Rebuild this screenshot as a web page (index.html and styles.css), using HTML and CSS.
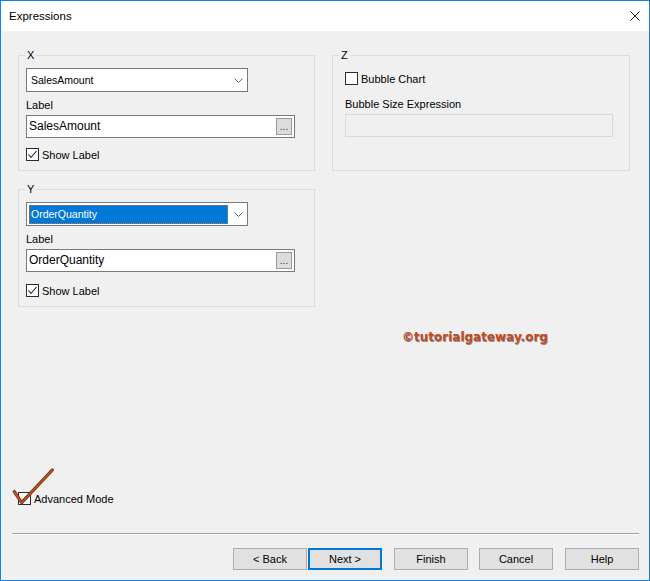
FILE: index.html
```html
<!DOCTYPE html>
<html>
<head>
<meta charset="utf-8">
<title>Expressions</title>
<link rel="stylesheet" href="styles.css">
</head>
<body>
<div class="window">
  <div class="titlebar">
    <span class="title">Expressions</span>
    <svg class="close" viewBox="0 0 10 10"><path d="M0.5 0.5 L9.5 9.5 M9.5 0.5 L0.5 9.5" stroke="#1a1a2a" stroke-width="1" fill="none"/></svg>
  </div>
  <div class="content">
    <div class="groups">
      <fieldset class="group group-x">
        <legend>X</legend>
        <div class="combo">
          <span class="combo-value">SalesAmount</span>
          <svg class="chevron" viewBox="0 0 9 5"><path d="M0.5 0.5 L4.5 4.5 L8.5 0.5" stroke="#666" stroke-width="1" fill="none"/></svg>
        </div>
        <div class="field-label">Label</div>
        <div class="textbox">
          <span class="textbox-value">SalesAmount</span>
          <span class="browse">...</span>
        </div>
        <div class="check">
          <span class="box"><svg class="tick" viewBox="0 0 11 11"><path d="M1.5 5.5 L4 8.5 L9.5 2" stroke="#1a1a2a" stroke-width="1.1" fill="none"/></svg></span>
          <span>Show Label</span>
        </div>
      </fieldset>
      <fieldset class="group group-z">
        <legend>Z</legend>
        <div class="check check-z">
          <span class="box"></span>
          <span>Bubble Chart</span>
        </div>
        <div class="field-label label-z">Bubble Size Expression</div>
        <div class="textbox textbox-disabled"></div>
      </fieldset>
      <fieldset class="group group-y">
        <legend>Y</legend>
        <div class="combo combo-focused">
          <span class="selection">OrderQuantity</span>
          <svg class="chevron" viewBox="0 0 9 5"><path d="M0.5 0.5 L4.5 4.5 L8.5 0.5" stroke="#666" stroke-width="1" fill="none"/></svg>
        </div>
        <div class="field-label">Label</div>
        <div class="textbox">
          <span class="textbox-value">OrderQuantity</span>
          <span class="browse">...</span>
        </div>
        <div class="check check-y">
          <span class="box"><svg class="tick" viewBox="0 0 11 11"><path d="M1.5 5.5 L4 8.5 L9.5 2" stroke="#1a1a2a" stroke-width="1.1" fill="none"/></svg></span>
          <span>Show Label</span>
        </div>
      </fieldset>
    </div>
    <div class="watermark">©tutorialgateway.org</div>
    <div class="advanced">
      <span class="box"></span>
      <span>Advanced Mode</span>
      <svg class="adv-mark" viewBox="0 0 44 40"><polyline points="2.3,25.7 9.7,36.7 40.3,4" stroke="#6b2a14" stroke-width="3.2" fill="none" stroke-linejoin="round" stroke-linecap="round"/><polyline points="2.3,25.7 9.7,36.7 40.3,4" stroke="#c9531f" stroke-width="1.6" fill="none" stroke-linejoin="round" stroke-linecap="round"/></svg>
    </div>
    <div class="separator"></div>
    <div class="buttons">
      <button class="btn">&lt; Back</button>
      <button class="btn btn-default">Next &gt;</button>
      <button class="btn btn-finish">Finish</button>
      <button class="btn btn-cancel">Cancel</button>
      <button class="btn btn-help">Help</button>
    </div>
  </div>
</div>
</body>
</html>
```
FILE: styles.css
```css
* { box-sizing: border-box; }
body {
  margin: 0;
  font-family: "Liberation Sans", Arial, sans-serif;
  font-size: 11px;
  color: #000;
}
.window {
  width: 650px;
  height: 581px;
  border: 1px solid #1883d7;
  display: flex;
  flex-direction: column;
  background: #f0f0f0;
}
.titlebar {
  flex: none;
  height: 30px;
  background: #fff;
  display: flex;
  align-items: center;
  justify-content: space-between;
  padding: 0 9px 0 8px;
}
.title { font-size: 11.5px; }
.close { width: 10px; height: 10px; display: block; }
.content {
  flex: 1;
  display: flex;
  flex-direction: column;
  padding: 18px 10px 10px 11px;
}
.groups {
  display: grid;
  grid-template-columns: 297px 298px;
  column-gap: 17px;
  row-gap: 12px;
  margin-left: 6px;
}
.group {
  margin: 0;
  min-width: 0;
  border: 1px solid #dcdcdc;
  padding: 6px 7px 9px 7px;
}
.group legend {
  font-size: 11px;
  line-height: 13px;
  padding: 0 2px;
  margin-left: -1px;
}
.group-z { padding-left: 12px; }
.group-z legend { margin-left: -6px; }
.combo {
  width: 222px;
  height: 24px;
  background: #fff;
  border: 1px solid #7a7a7a;
  display: flex;
  align-items: center;
  padding: 0 4px;
  font-size: 10.5px;
}
.combo-value { flex: 1; }
.chevron { width: 9px; height: 5px; display: block; }
.combo-focused { padding-left: 2px; }
.selection {
  width: 199px;
  height: 19px;
  margin-right: 6px;
  background: #0078d7;
  color: #fff;
  border: 1px dotted #d9703a;
  display: flex;
  align-items: center;
  padding-left: 1px;
}
.field-label {
  margin-top: 7px;
  line-height: 13px;
}
.textbox {
  margin-top: 3px;
  width: 269px;
  height: 23px;
  background: #fff;
  border: 1px solid #7a7a7a;
  display: flex;
  align-items: center;
  padding: 0 2px;
  font-size: 12px;
}
.textbox-value { flex: 1; padding-bottom: 2px; }
.browse {
  width: 16px;
  height: 17px;
  border: 1px solid #9a9a9a;
  background: #dcdcdc;
  font-size: 10px;
  line-height: 10px;
  display: flex;
  align-items: flex-end;
  justify-content: center;
  color: #333;
  padding-bottom: 2px;
}
.check {
  margin-top: 10px;
  height: 13px;
  display: flex;
  align-items: center;
  gap: 3px;
}
.check-y { margin-top: 12px; }
.box {
  width: 13px;
  height: 13px;
  border: 1px solid #2a2a3a;
  background: #fff;
  display: flex;
  align-items: center;
  justify-content: center;
  flex: none;
}
.tick { width: 11px; height: 11px; display: block; }
.check-z { margin-top: 4px; }
.label-z { margin-top: 13px; }
.textbox-disabled {
  width: 268px;
  background: #f0f0f0;
  border-color: #d9d9d9;
}
.watermark {
  margin: 23px 0 0 390px;
  font-family: "DejaVu Sans", Verdana, sans-serif;
  font-weight: bold;
  font-size: 12px;
  line-height: 14px;
  color: #c04a1a;
  text-shadow: 0.6px 0.6px 0 rgba(70, 30, 80, 0.55);
}
.advanced {
  margin-top: auto;
  margin-left: 6px;
  position: relative;
  display: flex;
  align-items: center;
  gap: 3px;
  height: 13px;
}
.adv-mark {
  position: absolute;
  left: -6px;
  top: -26px;
  width: 44px;
  height: 40px;
}
.separator {
  margin-top: 28px;
  height: 2px;
  border-top: 1px solid #a0a0a0;
  border-bottom: 1px solid #fff;
}
.buttons {
  margin-top: 13px;
  display: flex;
  justify-content: flex-end;
}
.btn {
  width: 74px;
  height: 22px;
  border: 1px solid #adadad;
  background: #e1e1e1;
  font-family: "Liberation Sans", Arial, sans-serif;
  font-size: 11px;
  color: #000;
  padding: 0;
  margin: 0;
}
.btn-default { border: 2px solid #0078d7; margin-left: 1px; }
.btn-finish { margin-left: 12px; }
.btn-cancel { margin-left: 11px; }
.btn-help { margin-left: 12px; }
```
